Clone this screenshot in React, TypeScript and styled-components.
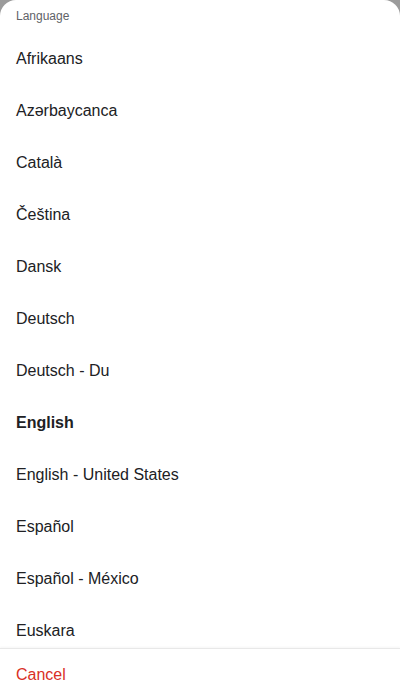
import React from "react";
import styled, { createGlobalStyle } from "styled-components";

const Global = createGlobalStyle`
  html, body { margin: 0; padding: 0; height: 100%; }
  body { background: #9b9b9b; font-family: "Liberation Sans", Arial, sans-serif; overflow: hidden; }
  #root { height: 100%; }
`;

const Screen = styled.div`
  height: 700px;
  width: 400px;
  display: flex;
  flex-direction: column;
`;

const Sheet = styled.div`
  flex: 1;
  min-height: 0;
  background: #fff;
  border-radius: 16px 16px 0 0;
  display: flex;
  flex-direction: column;
  overflow: hidden;
`;

const Header = styled.div`
  height: 32px;
  flex: none;
  padding: 0 16px;
  display: flex;
  align-items: center;
  font-size: 12px;
  color: #5f6368;
`;

const List = styled.ul`
  list-style: none;
  margin: 0;
  padding: 0;
  flex: 1;
  min-height: 0;
  overflow: hidden;
`;

const Item = styled.li<{ $selected?: boolean }>`
  height: 52px;
  box-sizing: border-box;
  padding: 2px 16px 0;
  display: flex;
  align-items: center;
  font-size: 16px;
  color: #202124;
  font-weight: ${(p) => (p.$selected ? 700 : 400)};
`;

const Footer = styled.div`
  flex: none;
  height: 52px;
  box-sizing: border-box;
  border-top: 1px solid #e8e8e8;
  box-shadow: 0 -1px 2px rgba(0, 0, 0, 0.04);
  display: flex;
  align-items: center;
  padding: 0 16px;
  font-size: 16px;
  color: #d93025;
`;

const languages = [
  "Afrikaans",
  "Azərbaycanca",
  "Català",
  "Čeština",
  "Dansk",
  "Deutsch",
  "Deutsch - Du",
  "English",
  "English - United States",
  "Español",
  "Español - México",
  "Euskara",
];

export default function App() {
  return (
    <Screen>
      <Global />
      <Sheet>
        <Header>Language</Header>
        <List>
          {languages.map((l) => (
            <Item key={l} $selected={l === "English"}>
              {l}
            </Item>
          ))}
        </List>
        <Footer>Cancel</Footer>
      </Sheet>
    </Screen>
  );
}
